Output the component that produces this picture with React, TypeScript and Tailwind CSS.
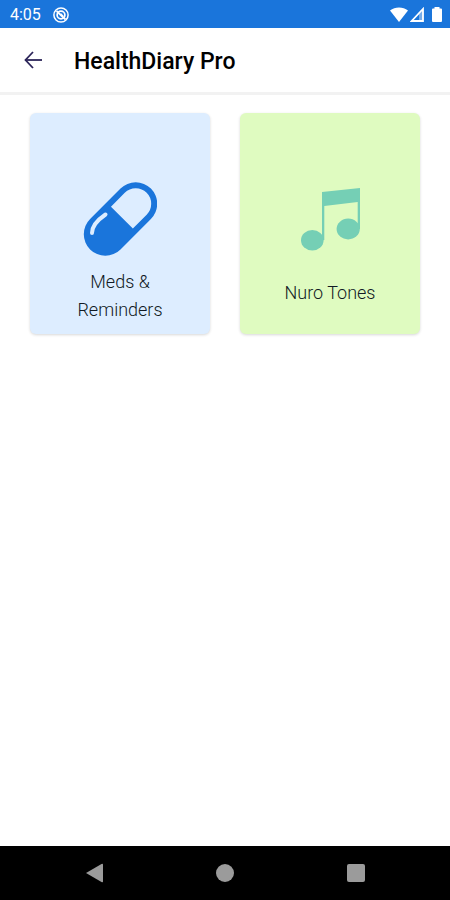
import React from 'react';

const PillIcon = () => (
  <svg viewBox="0 0 74 74" className="w-[74px] h-[74px]" aria-hidden="true">
    <g transform="translate(37.5 37) rotate(-45)">
      <rect x="-43" y="-21.5" width="86" height="43" rx="21.5" fill="#1a75db" />
      <path d="M2 -15.5H21.5A15.5 15.5 0 0 1 21.5 15.5H2Z" fill="#ddedff" />
    </g>
    <path d="M22.5 32.5C14.5 38 9 43.5 9 51" fill="none" stroke="#ddedff" strokeWidth="4" strokeLinecap="round" />
  </svg>
);

const MusicIcon = () => (
  <svg viewBox="0 0 60 64" className="w-[60px] h-16" fill="#75cfb5" aria-hidden="true">
    <path d="M22 5L60 1V42H57.7V15L24.3 19V53H22Z" />
    <ellipse cx="12.3" cy="53.3" rx="11.3" ry="10.3" />
    <ellipse cx="48.2" cy="42" rx="11.6" ry="10.4" />
  </svg>
);

const CARDS = [
  { label: 'Meds & Reminders', icon: PillIcon, style: 'bg-[#ddedff]', labelStyle: 'mt-3' },
  { label: 'Nuro Tones', icon: MusicIcon, style: 'bg-[#dffbc0]', labelStyle: 'mt-7' },
];

const StatusBar = () => (
  <div className="flex h-7 items-center justify-between bg-[#1a75db] pl-[10px] pr-2 pt-px text-white">
    <div className="flex items-center gap-3">
      <span className="text-base leading-6">4:05</span>
      <svg viewBox="0 0 16 16" className="w-4 h-4" fill="none" stroke="currentColor" aria-hidden="true">
        <circle cx="8" cy="8" r="7.1" strokeWidth="1.5" />
        <circle cx="8" cy="8" r="3.9" strokeWidth="1.7" />
        <path d="M3.5 4L12.5 12.5M7.5 7L10 9.5" strokeWidth="1.8" />
      </svg>
    </div>
    <div className="flex items-center" aria-hidden="true">
      <svg viewBox="0 0 18 15" className="w-[18px] h-[15px]" fill="currentColor">
        <path d="M9 15L0 3.6C5 -0.5 13 -0.5 18 3.6Z" />
      </svg>
      <svg viewBox="0 0 14 15" className="ml-[2px] w-[14px] h-[15px]" fill="none" stroke="currentColor">
        <path d="M1.7 14H13V2Z" strokeWidth="1.8" />
        <path d="M9 7V14H13V3Z" fill="currentColor" stroke="none" opacity=".4" />
      </svg>
      <svg viewBox="0 0 10 15" className="ml-2 w-[10px] h-[15px]" fill="currentColor">
        <path d="M2.5 0H7.5V1.5H9Q10 1.5 10 2.5V14Q10 15 9 15H1Q0 15 0 14V2.5Q0 1.5 1 1.5H2.5Z" />
      </svg>
    </div>
  </div>
);

export default function App() {
  return (
    <div className="flex min-h-screen flex-col bg-white font-[Roboto,sans-serif]">
      <StatusBar />

      <header className="flex h-[67px] items-center border-b-[3px] border-[#f2f2f2] pl-6">
        <button type="button" aria-label="Back" className="w-[18px] text-[#2b2459]">
          <svg viewBox="0 0 18 18" className="w-[18px] h-[18px]" fill="none" stroke="currentColor" strokeWidth="1.8" aria-hidden="true">
            <path d="M9 1L1.5 9L9 17" />
            <path d="M1.5 9H18" />
          </svg>
        </button>
        <h1 className="ml-8 pt-[3px] text-[23px] font-medium leading-8 text-black">HealthDiary Pro</h1>
      </header>

      <main className="grid flex-1 grid-cols-2 content-start gap-[30px] px-[30px] pt-[18px]">
        {CARDS.map(({ label, icon: Icon, style, labelStyle }) => (
          <button
            key={label}
            type="button"
            className={`flex h-[221px] flex-col items-center justify-end rounded-md px-9 pb-[10px] shadow-[0_1px_3px_rgba(0,0,0,0.16)] ${style}`}
          >
            <span className="flex min-h-[137px] flex-col items-center">
              <Icon />
              <span className={`text-lg font-light leading-7 text-[#111a24] ${labelStyle}`}>{label}</span>
            </span>
          </button>
        ))}
      </main>

      {/* Android navigation bar */}
      <nav className="flex h-[54px] items-center justify-between bg-black px-[85px] text-[#9b9b9b]">
        <button type="button" aria-label="Back">
          <svg viewBox="0 0 18 20" className="w-[18px] h-5" fill="currentColor" aria-hidden="true">
            <path d="M1 10L16.5 1Q18 .3 18 1.5V18.5Q18 19.7 16.5 19Z" />
          </svg>
        </button>
        <button type="button" aria-label="Home" className="h-[18px] w-[18px] rounded-full bg-[#9b9b9b]" />
        <button type="button" aria-label="Recent apps" className="h-[18px] w-[18px] rounded-[2px] bg-[#9b9b9b]" />
      </nav>
    </div>
  );
}
